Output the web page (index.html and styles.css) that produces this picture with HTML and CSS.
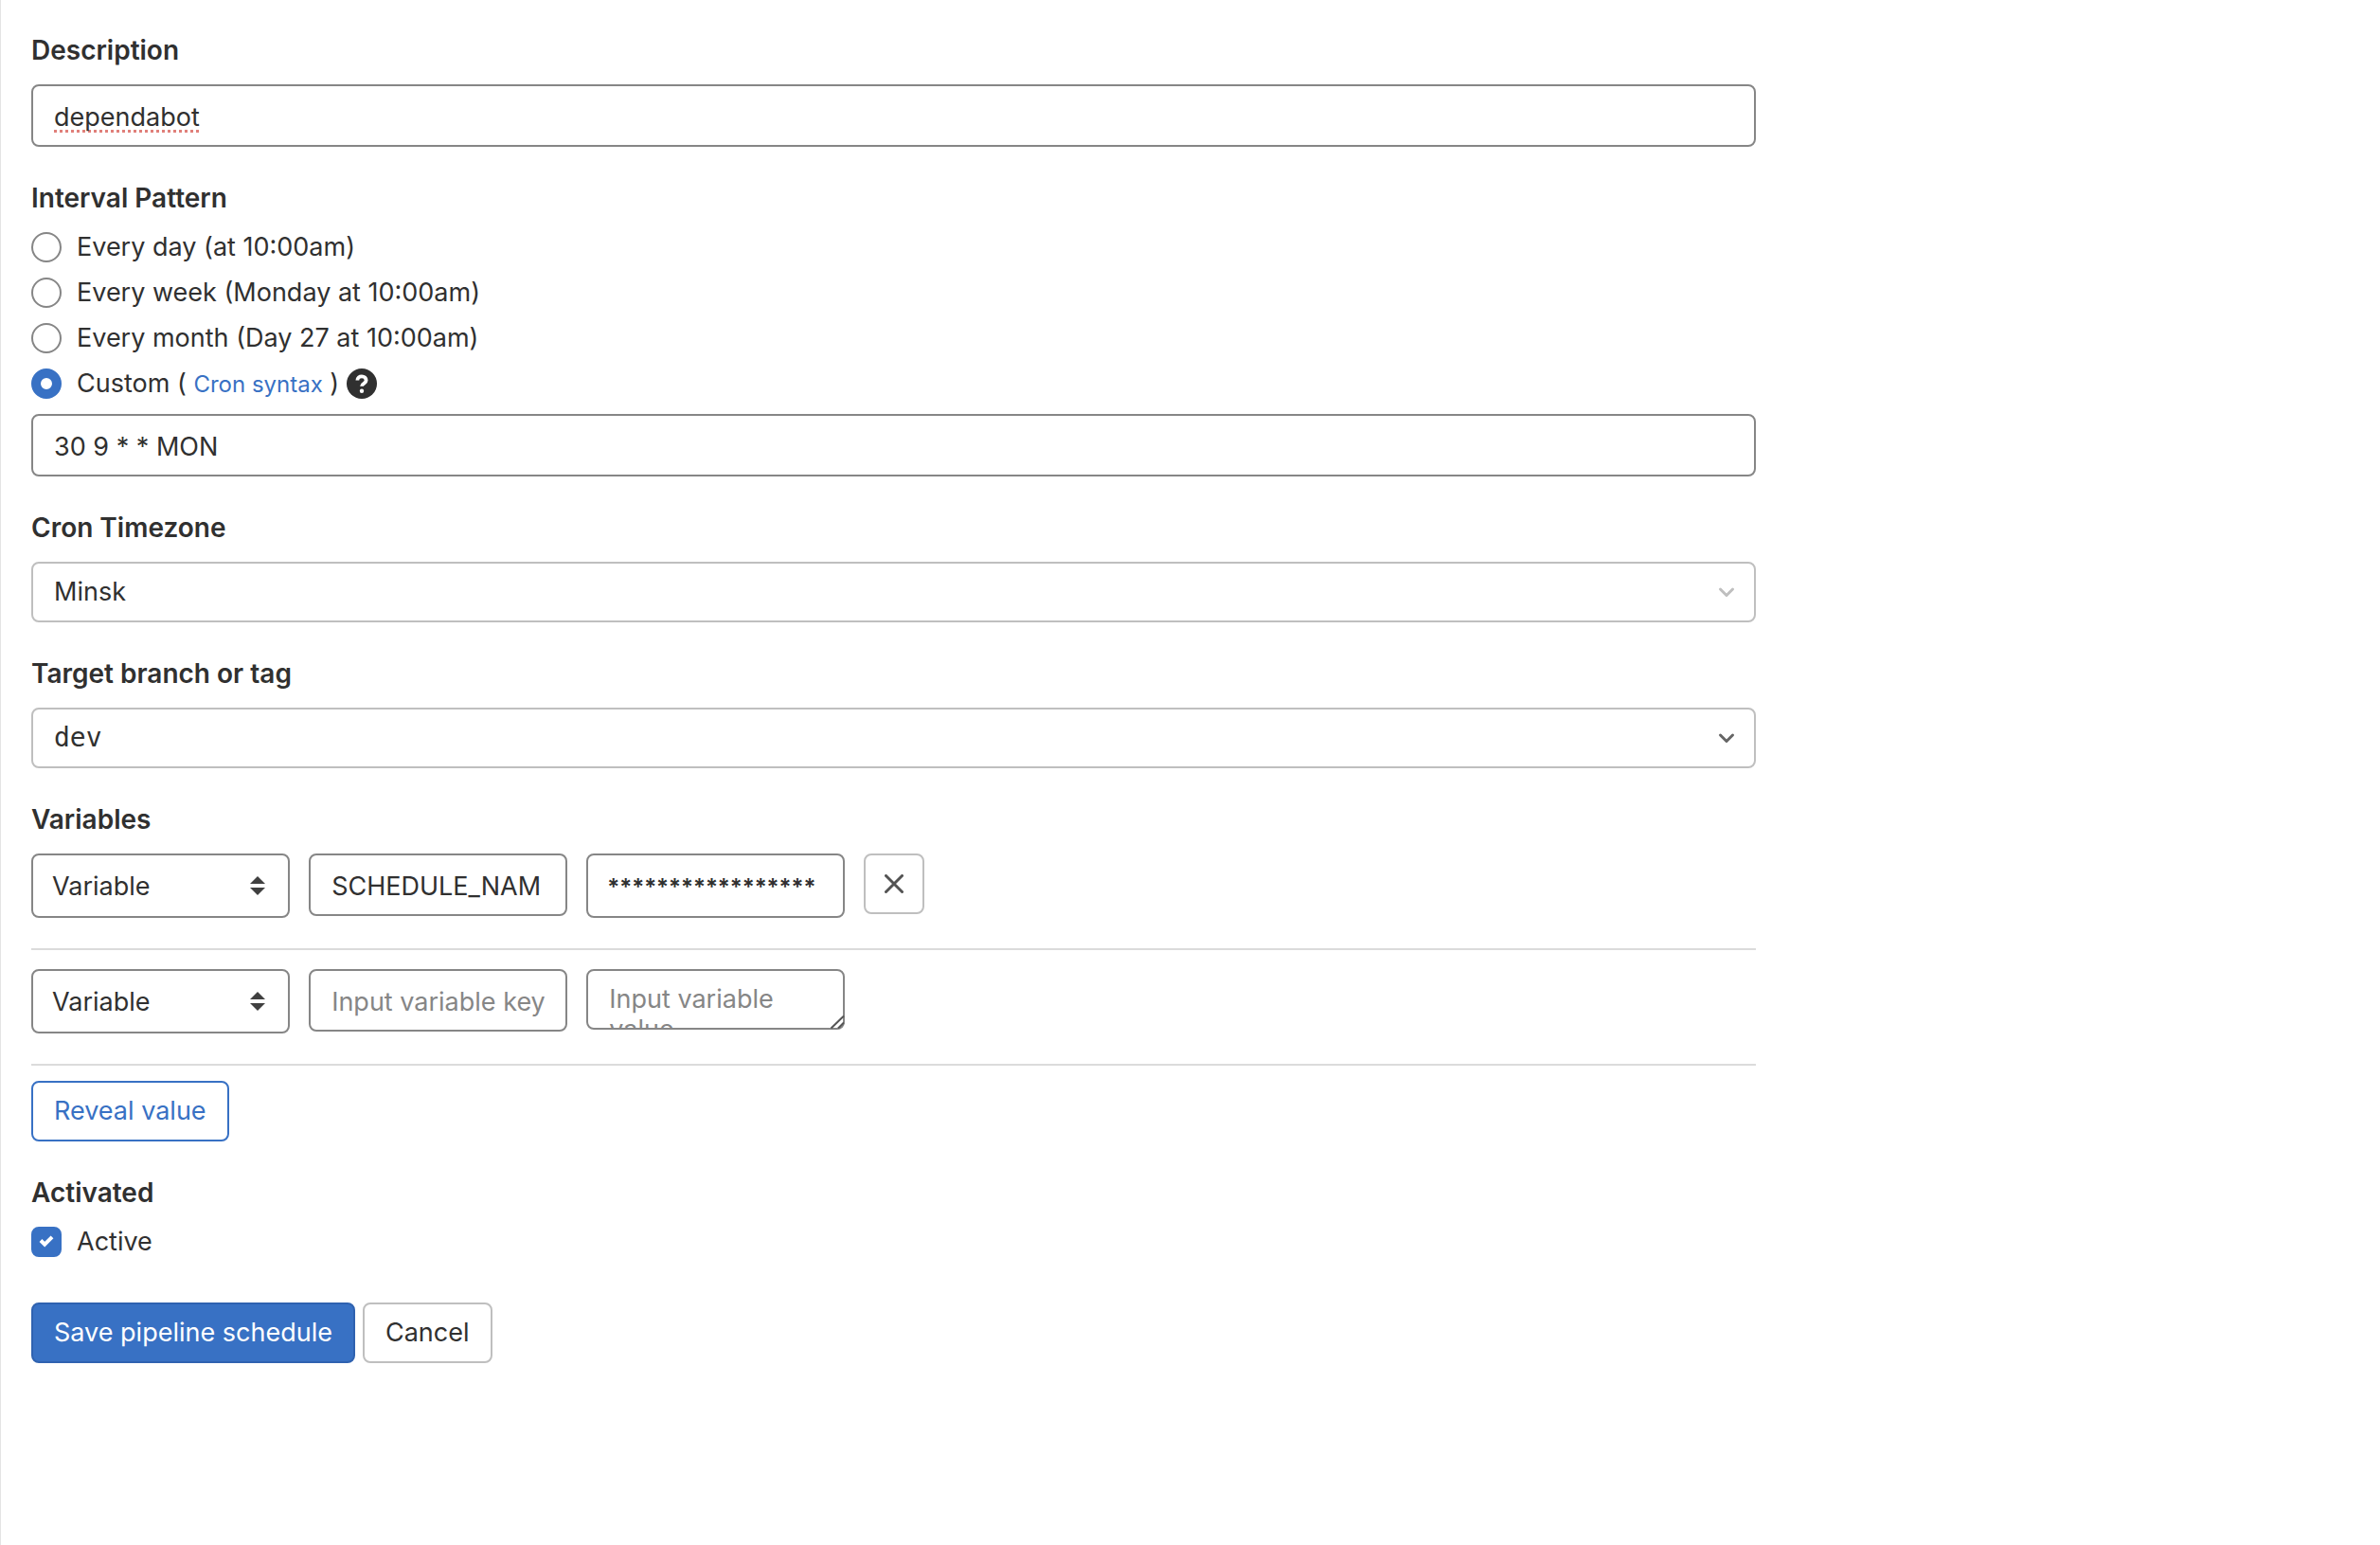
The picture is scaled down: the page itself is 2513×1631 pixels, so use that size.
FILE: index.html
```html
<!DOCTYPE html>
<html lang="en">
<head>
<meta charset="utf-8">
<title>Edit pipeline schedule</title>
<link rel="stylesheet" href="styles.css">
</head>
<body>
<main class="page">
<form class="schedule-form">
  <div class="group">
    <label class="label" for="description">Description</label>
    <input class="input misspelled" id="description" type="text" value="dependabot" spellcheck="false">
  </div>

  <fieldset class="group">
    <legend class="label label-tight">Interval Pattern</legend>
    <div class="choices">
      <label class="choice"><input class="radio" type="radio" name="interval"><span>Every day (at 10:00am)</span></label>
      <label class="choice"><input class="radio" type="radio" name="interval"><span>Every week (Monday at 10:00am)</span></label>
      <label class="choice"><input class="radio" type="radio" name="interval"><span>Every month (Day 27 at 10:00am)</span></label>
      <div class="choice">
        <input class="radio" type="radio" name="interval" id="custom" checked>
        <span><label for="custom">Custom (</label> <a class="link" href="#cron">Cron syntax</a> )</span>
        <a class="help" href="#help" aria-label="Help">
          <svg viewBox="0 0 16 16" width="32" height="32" aria-hidden="true"><circle cx="8" cy="8" r="8" fill="#303030"/><path d="M5.700 6.200C5.700 4.900 6.700 4.200 8 4.200s2.300.8 2.300 2c0 .9-.5 1.200-1.200 1.700-.7.400-1.100.7-1.100 1.500" fill="none" stroke="#fff" stroke-width="1.900"/><circle cx="8" cy="11.900" r="1.100" fill="#fff"/></svg>
        </a>
      </div>
    </div>
    <input class="input" type="text" value="30 9 * * MON" aria-label="Custom interval pattern">
  </fieldset>

  <div class="group">
    <label class="label" for="timezone">Cron Timezone</label>
    <div class="picker">
      <select class="select" id="timezone"><option>Minsk</option></select>
      <svg class="chevron muted" viewBox="0 0 32 32" aria-hidden="true"><path d="M9.500 13 16 19.500 22.500 13"/></svg>
    </div>
  </div>

  <div class="group">
    <label class="label" for="branch">Target branch or tag</label>
    <div class="picker">
      <select class="select mono" id="branch"><option>dev</option></select>
      <svg class="chevron" viewBox="0 0 32 32" aria-hidden="true"><path d="M9.500 13 16 19.500 22.500 13"/></svg>
    </div>
  </div>

  <fieldset class="group">
    <legend class="label">Variables</legend>
    <div class="variable">
      <div class="picker">
        <select class="select type" aria-label="Variable type"><option>Variable</option></select>
        <svg class="arrows" viewBox="0 0 16 20" aria-hidden="true"><path d="M0 8 8 0l8 8zM0 12h16l-8 8z"/></svg>
      </div>
      <input class="input" type="text" value="SCHEDULE_NAM" aria-label="Variable key">
      <textarea class="input area masked" rows="1" aria-label="Variable value" spellcheck="false">*****************</textarea>
      <button class="button icon" type="button" aria-label="Remove variable">
        <svg viewBox="0 0 20 20" width="20" height="20" aria-hidden="true"><path d="M1.500 1.500l17 17M18.500 1.500l-17 17" stroke="#535353" stroke-width="3" stroke-linecap="round"/></svg>
      </button>
    </div>
    <div class="variable">
      <div class="picker">
        <select class="select type" aria-label="Variable type"><option>Variable</option></select>
        <svg class="arrows" viewBox="0 0 16 20" aria-hidden="true"><path d="M0 8 8 0l8 8zM0 12h16l-8 8z"/></svg>
      </div>
      <input class="input" type="text" placeholder="Input variable key" aria-label="Variable key">
      <div class="picker">
        <textarea class="input area" rows="1" placeholder="Input variable value" aria-label="Variable value"></textarea>
        <svg class="grip" viewBox="0 0 16 16" aria-hidden="true"><path d="M1.500 14.500 15 1.500M9 14.500l6-6"/></svg>
      </div>
    </div>
    <button class="button outline" type="button">Reveal value</button>
  </fieldset>

  <fieldset class="group">
    <legend class="label label-tight">Activated</legend>
    <label class="choice"><span class="tick"><input class="checkbox" type="checkbox" checked><svg class="tick-mark" viewBox="0 0 32 32" aria-hidden="true"><path d="M10 14.500 14.200 18.700 22 10.900"/></svg></span><span>Active</span></label>
  </fieldset>

  <div class="actions">
    <button class="button primary" type="submit">Save pipeline schedule</button>
    <button class="button" type="button">Cancel</button>
  </div>
</form>
</main>
</body>
</html>
```
FILE: styles.css
```css
*, *::before, *::after { box-sizing: border-box; }

body {
  margin: 0;
  background: #fff;
  color: #303030;
  font: 27px/40px Inter, "Liberation Sans", sans-serif;
}

input, select, textarea, button { margin: 0; font: inherit; color: inherit; }

.page {
  min-height: 100vh;
  padding: 33px 32px;
  border-left: 1px solid #e4e4e4;
}

.schedule-form { max-width: 1821px; }

.group { margin: 0 0 34px; padding: 0; border: 0; min-width: 0; }

.label { display: block; margin-bottom: 16px; padding: 0; font-size: 28px; font-weight: 600; }
.label-tight { margin-bottom: 12px; }

.input, .select {
  display: block;
  width: 100%;
  height: 66px;
  padding: 14px 22px 12px;
  border: 2px solid #868686;
  border-radius: 8px;
  background: #fff;
  outline: 0;
}
.input::placeholder { color: #868686; opacity: 1; }

.misspelled {
  text-decoration: underline dotted #e0807a 3px;
  text-underline-offset: 4px;
  text-decoration-skip-ink: none;
}

.choices { display: grid; gap: 8px; margin-bottom: 12px; }
.choice { display: flex; align-items: center; gap: 16px; height: 40px; }

.radio, .checkbox {
  flex: none;
  display: block;
  appearance: none;
  width: 32px;
  height: 32px;
  border: 2px solid #868686;
  border-radius: 50%;
  background: #fff;
}
.radio:checked { border: 10px solid #3871c4; }
.checkbox { border-radius: 8px; }
.checkbox:checked { border-color: #3871c4; background: #3871c4; }

.tick { display: grid; }
.tick > * { grid-area: 1 / 1; }
.tick-mark { width: 32px; height: 32px; fill: none; stroke: #fff; stroke-width: 4px; pointer-events: none; }

.link { color: #3871c4; font-size: 24px; line-height: 24px; text-decoration: none; }
.help { display: flex; margin-left: -8px; }

.picker { display: grid; align-items: center; }
.picker > * { grid-area: 1 / 1; }
.select { appearance: none; height: 64px; padding: 0 22px; border-color: #bfbfbf; }
.mono { font-family: "DejaVu Sans Mono", monospace; font-size: 28px; }
.type { height: 68px; padding: 2px 20px 0; border-color: #868686; }

.chevron, .arrows, .grip { justify-self: end; pointer-events: none; }
.chevron { width: 32px; height: 32px; margin-right: 15px; fill: none; stroke: #666; stroke-width: 3px; stroke-linecap: round; stroke-linejoin: round; }
.chevron.muted { stroke: #bfbfbf; }
.arrows { width: 16px; height: 20px; margin-right: 26px; fill: #404040; }
.grip { align-self: end; width: 16px; height: 16px; fill: none; stroke: #555; stroke-width: 2px; }

.variable {
  display: grid;
  grid-template-columns: repeat(3, 15%) auto;
  gap: 20px;
  align-items: start;
  justify-content: start;
  margin-bottom: 20px;
  padding-bottom: 32px;
  border-bottom: 2px solid #dbdbdb;
}
.variable + .variable { margin-bottom: 16px; }

.area { height: 64px; padding: 14px 22px; line-height: 32px; overflow: hidden; resize: none; }
.masked { height: 68px; padding: 18px 20px 14px; font-size: 24px; font-weight: 600; white-space: nowrap; }

.button {
  display: inline-flex;
  align-items: center;
  justify-content: center;
  height: 64px;
  padding: 0 22px;
  border: 2px solid #bfbfbf;
  border-radius: 8px;
  background: #fff;
}
.icon { width: 64px; padding: 0; }
.outline { border-color: #3871c4; color: #3871c4; }
.primary { border-color: #2f62b0; background: #3871c4; color: #fff; }

.actions { display: flex; gap: 8px; margin-top: 44px; }
```
